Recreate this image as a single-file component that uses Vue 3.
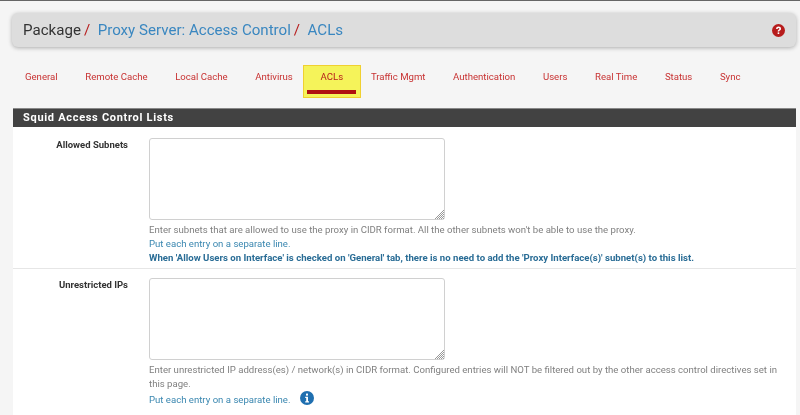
<script setup>
const tabs = [
  { label: 'General' },
  { label: 'Remote Cache' },
  { label: 'Local Cache' },
  { label: 'Antivirus' },
  { label: 'ACLs', active: true },
  { label: 'Traffic Mgmt' },
  { label: 'Authentication' },
  { label: 'Users' },
  { label: 'Real Time' },
  { label: 'Status' },
  { label: 'Sync' },
]
</script>

<template>
  <div class="page">
    <div class="crumbs">
      <h1 class="title">
        <span>Package</span><i class="sep">/</i><a>Proxy Server: Access Control</a><i class="sep">/</i><a>ACLs</a>
      </h1>
      <svg class="help" viewBox="0 0 14 14" width="13" height="13">
        <circle cx="7" cy="7" r="7" fill="#b71c1c" />
        <path d="M4.4 5.4C4.5 3.7 5.6 2.8 7.1 2.8c1.5 0 2.6.9 2.6 2.2 0 1.1-.6 1.6-1.3 2-.5.3-.7.6-.7 1.2H6.1c0-1 .3-1.6 1-2.1.6-.4.9-.6.9-1.1 0-.5-.4-.8-.9-.8-.6 0-1 .4-1.1 1.1z" fill="#fff" />
        <rect x="6.1" y="9" width="1.7" height="1.8" fill="#fff" />
      </svg>
    </div>
    <nav class="tabs">
      <a v-for="t in tabs" :key="t.label" class="tab" :class="{ active: t.active }">{{ t.label }}</a>
    </nav>
    <section class="panel">
      <h2 class="head">Squid Access Control Lists</h2>
      <div class="row first">
        <label class="lbl">Allowed Subnets</label>
        <div class="field">
          <div class="boxwrap">
            <textarea class="box"></textarea>
            <svg class="grip" viewBox="0 0 10 10" width="10" height="10">
              <path d="M1 10L10 1M3 10L10 3M5 10L10 5M7 10L10 7M9 10L10 9" stroke="#999" stroke-width="1" fill="none" />
            </svg>
          </div>
          <p class="hint">Enter subnets that are allowed to use the proxy in CIDR format. All the other subnets won't be able to use the proxy.</p>
          <p class="info">Put each entry on a separate line.</p>
          <p class="info strong">When 'Allow Users on Interface' is checked on 'General' tab, there is no need to add the 'Proxy Interface(s)' subnet(s) to this list.</p>
        </div>
      </div>
      <div class="row">
        <label class="lbl">Unrestricted IPs</label>
        <div class="field">
          <div class="boxwrap">
            <textarea class="box"></textarea>
            <svg class="grip" viewBox="0 0 10 10" width="10" height="10">
              <path d="M1 10L10 1M3 10L10 3M5 10L10 5M7 10L10 7M9 10L10 9" stroke="#999" stroke-width="1" fill="none" />
            </svg>
          </div>
          <p class="hint wrap">Enter unrestricted IP address(es) / network(s) in CIDR format. Configured entries will NOT be filtered out by the other access control directives set in this page.</p>
          <p class="info last">Put each entry on a separate line.
            <svg class="i" viewBox="0 0 14 14" width="14" height="14">
              <circle cx="7" cy="7" r="7" fill="#1f6fb0" />
              <rect x="6" y="2.6" width="2" height="2" fill="#fff" />
              <path d="M5.2 5.8H8v4.4h1v1.2H5.2v-1.2h1V7H5.2z" fill="#fff" />
            </svg>
          </p>
        </div>
      </div>
    </section>
  </div>
</template>

<style>
html, body { margin: 0; background: #f5f5f5; }
</style>

<style scoped>
.page {
  width: 800px;
  height: 415px;
  overflow: hidden;
  box-sizing: border-box;
  background: #f5f5f5;
  border-top: 1px solid #666;
  padding: 12px 4px 0 12px;
  font-family: Roboto, "Liberation Sans", sans-serif;
  filter: blur(0.35px);
}
.crumbs {
  height: 34px;
  background: #ddd;
  border-radius: 6px;
  box-shadow: 0 1px 4px rgba(0, 0, 0, .3);
  display: flex;
  align-items: center;
  justify-content: space-between;
  padding: 0 11px 0 11px;
}
.title { margin: 0; font-size: 15.1px; font-weight: 400; color: #333; white-space: nowrap; }
.title a { color: #3a87c0; }
.sep { color: #b71c1c; font-style: normal; margin: 0 7.5px 0 3px; }
.help { display: block; }
.tabs {
  display: flex;
  align-items: flex-start;
  height: 43px;
  margin: 18px 0 0 -0.8px;
}
.tab {
  padding: 0 13.8px;
  font-size: 9.6px;
  line-height: 24px;
  color: #c83232;
  white-space: nowrap;
}
.tab.active {
  box-sizing: border-box;
  position: relative;
  height: 33px;
  margin: 0 -3.5px;
  padding: 0 16.5px;
  line-height: 22px;
  background: #f5f35a;
  border: 1px solid #f0d030;
  color: #b71c1c;
}
.active::after {
  content: "";
  position: absolute;
  left: 3px;
  right: 4px;
  top: 24px;
  height: 4px;
  background: #b01010;
}
.panel { background: #fff; margin-left: 1px; min-height: 320px; }
.head {
  box-sizing: border-box;
  margin: 0;
  height: 19px;
  background: #424242;
  border-top: 1px solid #888;
  color: #fff;
  font-size: 11px;
  font-weight: 700;
  letter-spacing: .7px;
  line-height: 18px;
  padding-left: 10px;
}
.row { display: flex; padding-top: 9px; }
.row.first {
  box-sizing: border-box;
  height: 142px;
  padding-top: 11px;
  border-bottom: 1px solid #e6e6e6;
}
.lbl {
  width: 115px;
  text-align: right;
  font-size: 9.5px;
  font-weight: 700;
  color: #333;
  line-height: 14px;
  flex: none;
}
.field { margin-left: 21px; flex: 1; padding-right: 15px; }
.boxwrap { position: relative; width: 296px; margin-bottom: 3px; }
.box {
  display: block;
  box-sizing: border-box;
  width: 296px;
  height: 82px;
  background: #fff;
  border: 1px solid #d0d0d0;
  border-radius: 3px;
  padding: 0;
  resize: none;
}
.grip { position: absolute; right: 1px; bottom: 1px; }
p { margin: 0; font-size: 9.6px; line-height: 14px; white-space: nowrap; }
.hint { color: #808080; }
.hint.wrap { white-space: normal; }
.info { color: #3a87b0; }
.strong { color: #2a6d96; font-weight: 700; }
.last { display: flex; align-items: center; gap: 9px; margin-top: 2px; }
.i { display: block; margin-top: -5px; }
</style>
